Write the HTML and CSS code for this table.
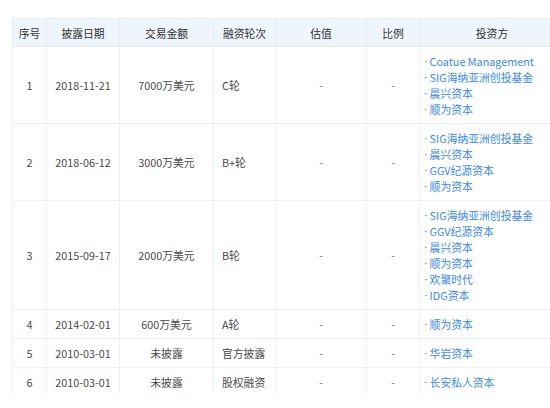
FILE: index.html
```html
<!DOCTYPE html>
<html lang="zh">
<head>
<meta charset="utf-8">
<link rel="stylesheet" href="styles.css">
</head>
<body>
<div class="wrap">
<table class="fin">
<colgroup>
<col class="c1"><col class="c2"><col class="c3"><col class="c4"><col class="c5"><col class="c6"><col class="c7">
</colgroup>
<thead>
<tr><th>序号</th><th>披露日期</th><th>交易金额</th><th>融资轮次</th><th>估值</th><th>比例</th><th>投资方</th></tr>
</thead>
<tbody>
<tr><td>1</td><td>2018-11-21</td><td>7000万美元</td><td class="left">C轮</td><td class="dash">-</td><td class="dash">-</td>
<td class="inv"><div><span class="dot">·</span><a>Coatue Management</a></div><div><span class="dot">·</span><a>SIG海纳亚洲创投基金</a></div><div><span class="dot">·</span><a>晨兴资本</a></div><div><span class="dot">·</span><a>顺为资本</a></div></td></tr>
<tr><td>2</td><td>2018-06-12</td><td>3000万美元</td><td class="left">B+轮</td><td class="dash">-</td><td class="dash">-</td>
<td class="inv"><div><span class="dot">·</span><a>SIG海纳亚洲创投基金</a></div><div><span class="dot">·</span><a>晨兴资本</a></div><div><span class="dot">·</span><a>GGV纪源资本</a></div><div><span class="dot">·</span><a>顺为资本</a></div></td></tr>
<tr><td>3</td><td>2015-09-17</td><td>2000万美元</td><td class="left">B轮</td><td class="dash">-</td><td class="dash">-</td>
<td class="inv"><div><span class="dot">·</span><a>SIG海纳亚洲创投基金</a></div><div><span class="dot">·</span><a>GGV纪源资本</a></div><div><span class="dot">·</span><a>晨兴资本</a></div><div><span class="dot">·</span><a>顺为资本</a></div><div><span class="dot">·</span><a>欢聚时代</a></div><div><span class="dot">·</span><a>IDG资本</a></div></td></tr>
<tr><td>4</td><td>2014-02-01</td><td>600万美元</td><td class="left">A轮</td><td class="dash">-</td><td class="dash">-</td>
<td class="inv"><div><span class="dot">·</span><a>顺为资本</a></div></td></tr>
<tr><td>5</td><td>2010-03-01</td><td>未披露</td><td class="left">官方披露</td><td class="dash">-</td><td class="dash">-</td>
<td class="inv"><div><span class="dot">·</span><a>华岩资本</a></div></td></tr>
<tr><td>6</td><td>2010-03-01</td><td>未披露</td><td class="left">股权融资</td><td class="dash">-</td><td class="dash">-</td>
<td class="inv"><div><span class="dot">·</span><a>长安私人资本</a></div></td></tr>
</tbody>
</table>
</div>
</body>
</html>
```
FILE: styles.css
```css
html, body {
  margin: 0;
  padding: 0;
  background: #fff;
  overflow: hidden;
}
body {
  font-family: "Noto Sans CJK SC", "Noto Sans", sans-serif;
  font-size: 10.8px;
  color: #444;
}
.wrap {
  padding: 18px 0 0 12px;
  height: 375px;
  overflow: hidden;
}
.fin {
  border-collapse: collapse;
  table-layout: fixed;
  width: 552px;
}
.c1 { width: 34px; }
.c2 { width: 73px; }
.c3 { width: 94px; }
.c4 { width: 62px; }
.c5 { width: 91px; }
.c6 { width: 53px; }
.c7 { width: 145px; }
.fin th {
  background: #eef5fc;
  font-weight: normal;
  color: #333;
  height: 27px;
  padding: 0;
  border: 1px solid #e6edf5;
  text-align: center;
  line-height: 16px;
}
.fin td {
  border: 1px solid #ebf0f6;
  height: 16px;
  padding: 6px 0 6px;
  line-height: 16px;
  text-align: center;
  vertical-align: middle;
  white-space: nowrap;
  color: #4a4a4a;
}
.fin td.left {
  text-align: left;
  padding-left: 8px;
}
.fin td.dash {
  color: #777;
}
.fin td.inv {
  text-align: left;
  padding-left: 4px;
}
.inv div {
  height: 16px;
  display: flex;
  align-items: center;
}
.dot {
  font-family: "Liberation Sans", sans-serif;
  color: #666;
  margin-right: 2px;
}
.inv a {
  color: #3d8ae0;
  text-decoration: none;
}
```
